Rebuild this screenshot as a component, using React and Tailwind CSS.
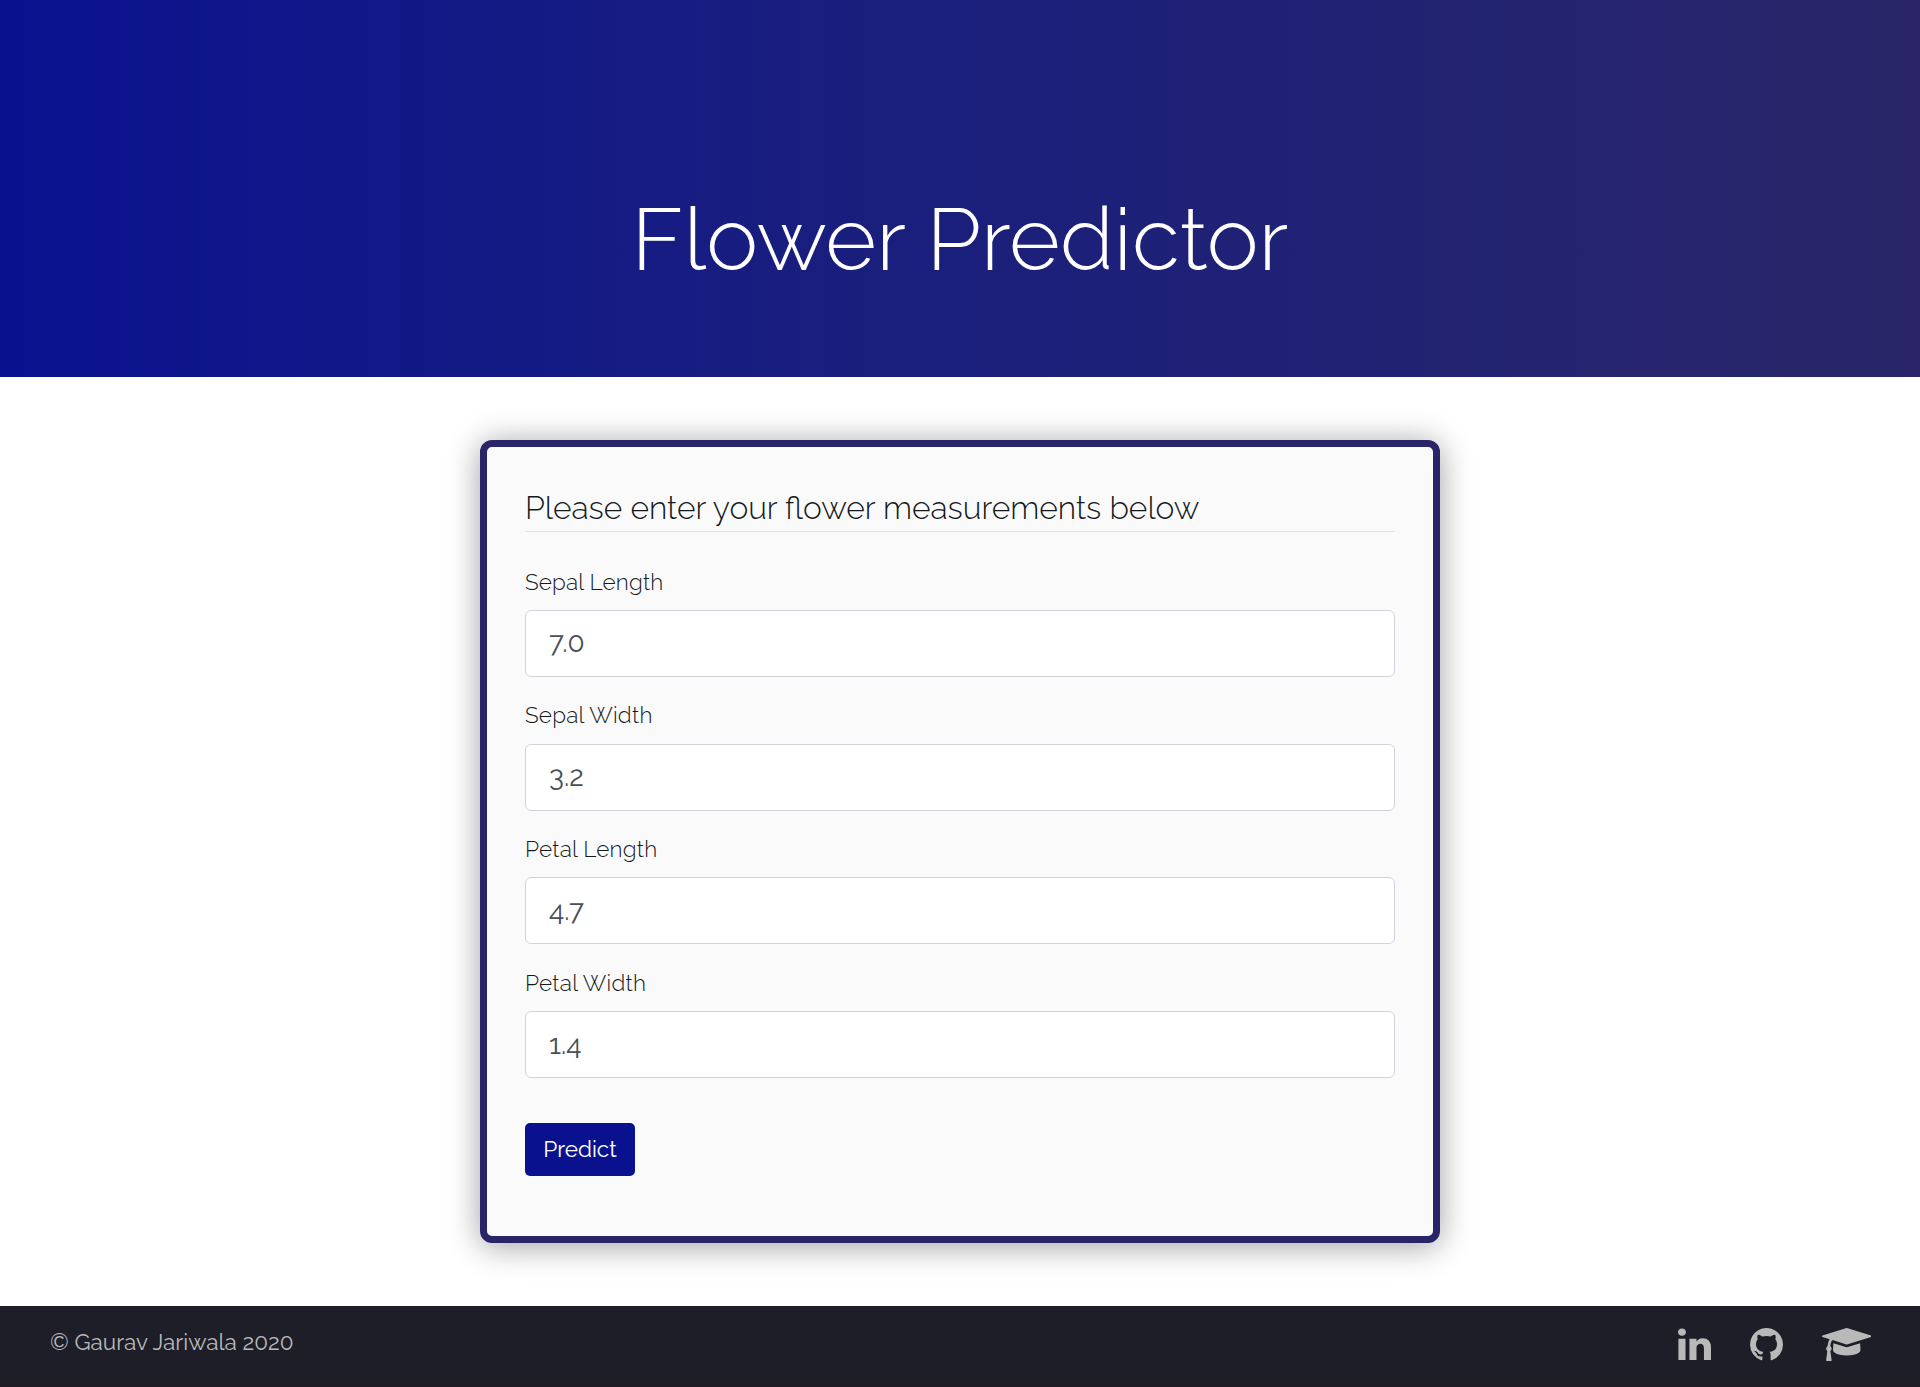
import { useState } from "react";

const FIELDS = [
  { name: "Sepal Length", value: "7.0", height: "h-[134px]", text: "leading-[32px] tracking-[0.18px]", nudge: "pb-[2px]" },
  { name: "Sepal Width", value: "3.2", height: "h-[133px]", text: "leading-[30px] tracking-[0.25px]", nudge: "pb-[2px]" },
  { name: "Petal Length", value: "4.7", height: "h-[134px]", text: "leading-[32px] tracking-[0.22px]", nudge: "pb-0" },
  { name: "Petal Width", value: "1.4", height: "h-[133px]", text: "leading-[32px] tracking-[0.27px]", nudge: "pb-0" },
];

const ICONS = [
  {
    label: "LinkedIn",
    width: "w-[33px]",
    box: "0 128 1536 1536",
    d: "M349 625v991h-330v-991h330zm21-306q1 73-50.5 122t-135.5 49h-2q-82 0-132-49t-50-122q0-74 51.5-122.5t134.5-48.5 133 48.5 51 122.5zm1166 729v568h-329v-530q0-105-40.5-164.5t-126.5-59.5q-63 0-105.5 34.5t-63.5 85.5q-11 30-11 81v553h-329q2-399 2-647t-1-296l-1-48h329v144h-2q20-32 41-56t56.5-52 87-43.5 114.5-15.5q171 0 275 113.5t104 332.5z",
  },
  {
    label: "GitHub",
    width: "w-[33px]",
    box: "0 128 1536 1536",
    d: "M768 128q209 0 385.5 103t279.5 279.5 103 385.5q0 251-146.5 451.5t-378.5 277.5q-27 5-40-7t-13-30q0-3 .5-76.5t.5-134.5q0-97-52-142 57-6 102.5-18t94-39 81-66.5 53-105 20.5-150.5q0-119-79-206 37-91-8-204-28-9-81 11t-92 44l-38 24q-93-26-192-26t-192 26q-16-11-42.5-27t-83.5-38.5-85-13.5q-45 113-8 204-79 87-79 206 0 85 20.5 150t52.5 105 80.5 67 94 39 102.5 18q-39 36-49 103-21 10-45 15t-57 5-65.5-21.5-55.5-62.5q-19-32-48.5-52t-49.5-24l-20-3q-21 0-29 4.5t-5 11.5 9 14 13 12l7 5q22 10 43.5 38t31.5 51l10 23q13 38 44 61.5t67 30 69.5 7 55.5-3.5l23-4q0 38 .5 88.5t.5 54.5q0 18-13 30t-40 7q-232-77-378.5-277.5t-146.5-451.5q0-209 103-385.5t279.5-279.5 385.5-103z",
  },
  {
    label: "Education",
    width: "w-[49.5px]",
    box: "0 128 2304 1536",
    d: "M1774 836l18 316q4 69-82 128t-235 93.5-323 34.5-323-34.5-235-93.5-82-128l18-316 574 181q22 7 48 7t48-7zm530-324q0 23-22 31l-1120 352q-4 1-10 1t-10-1l-652-206q-43 34-71 111.5t-34 178.5q63 36 63 109 0 69-58 107l58 433q2 14-8 25-9 11-24 11h-192q-15 0-24-11-10-11-8-25l58-433q-58-38-58-107 0-73 65-111 11-207 98-330l-333-104q-22-8-22-31t22-31l1120-352q4-1 10-1t10 1l1120 352q22 8 22 31z",
  },
];

function Field({ field }) {
  const [value, setValue] = useState(field.value);
  return (
    <label className={`flex shrink-0 flex-col ${field.height}`}>
      <span className={`h-[44px] text-[22.5px] font-light whitespace-nowrap text-[#15191d] ${field.text}`}>
        {field.name}
      </span>
      <input
        className={`h-[67px] w-full rounded-[6px] border border-[#ced4da] bg-white px-[23px] text-[28px] text-[#495057] outline-none ${field.nudge}`}
        value={value}
        onChange={(e) => setValue(e.target.value)}
      />
    </label>
  );
}

export default function App() {
  return (
    <div className="flex h-[1387px] flex-col bg-white font-['Raleway','Lato',sans-serif]">
      <header className="flex h-[377px] shrink-0 justify-center bg-linear-to-r from-[#0a118f] to-[#292568] pt-[187px]">
        <h1 className="text-[87.5px] leading-[105px] font-light text-white">Flower Predictor</h1>
      </header>
      <main className="flex flex-1 flex-col items-center pt-[63px]">
        <form className="flex h-[803px] w-[960px] flex-col rounded-[12px] border-[7px] border-[#292568] bg-[#fafafa] px-[38px] pt-[43px] shadow-[0_3px_32px_rgba(0,0,0,0.38)]">
          <h2 className="h-[42px] shrink-0 border-b border-[#dee2e6] text-[31.77px] leading-[36px] font-light text-[#15191d]">
            Please enter your flower measurements below
          </h2>
          <div className="flex flex-col pt-[34px]">
            {FIELDS.map((f) => (
              <Field key={f.name} field={f} />
            ))}
          </div>
          <button
            type="button"
            className="mt-[23px] h-[53px] w-[110px] shrink-0 rounded-[5px] bg-[#0a118f] text-[22.5px] text-white"
          >
            Predict
          </button>
        </form>
      </main>
      <footer className="flex h-[81px] shrink-0 items-start justify-between border-b border-[#201a24] bg-[#1e1e28] pt-[22px] pr-[49px] pl-[50px] text-[#b9b9b9]">
        <p className="text-[22.5px] leading-[28px]">© Gaurav Jariwala 2020</p>
        <nav className="flex gap-[39px]">
          {ICONS.map((icon) => (
            <a key={icon.label} href="#" aria-label={icon.label}>
              <svg className={`h-[33px] ${icon.width}`} viewBox={icon.box} fill="currentColor">
                <path d={icon.d} />
              </svg>
            </a>
          ))}
        </nav>
      </footer>
    </div>
  );
}
